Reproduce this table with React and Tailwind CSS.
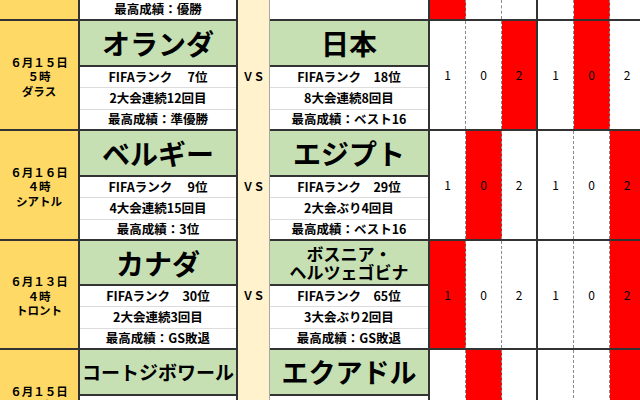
import React from "react";

const matches = [
  {
    date: ["６月１５日", "５時", "ダラス"],
    h: 110,
    a: { name: ["オランダ"], size: "text-[28px]", info: ["FIFAランク　 7位", "2大会連続12回目", "最高成績：準優勝"] },
    b: { name: ["日本"], size: "text-[28px]", info: ["FIFAランク　18位", "8大会連続8回目", "最高成績：ベスト16"] },
    red: [2, 4],
  },
  {
    date: ["６月１６日", "４時", "シアトル"],
    h: 110,
    a: { name: ["ベルギー"], size: "text-[28px]", info: ["FIFAランク　 9位", "4大会連続15回目", "最高成績：3位"] },
    b: { name: ["エジプト"], size: "text-[28px]", info: ["FIFAランク　29位", "2大会ぶり4回目", "最高成績：ベスト16"] },
    red: [1, 5],
  },
  {
    date: ["６月１３日", "４時", "トロント"],
    h: 109,
    a: { name: ["カナダ"], size: "text-[28px]", info: ["FIFAランク　30位", "2大会連続3回目", "最高成績：GS敗退"] },
    b: { name: ["ボスニア・", "ヘルツェゴビナ"], size: "text-[17px] leading-[18px]", info: ["FIFAランク　65位", "3大会ぶり2回目", "最高成績：GS敗退"] },
    red: [0, 5],
  },
  {
    date: ["６月１５日", "８時", "マイアミ"],
    h: 110,
    a: { name: ["コートジボワール"], size: "text-[19px]", info: ["FIFAランク　42位", "3大会ぶり4回目", "最高成績：GS敗退"] },
    b: { name: ["エクアドル"], size: "text-[27px]", info: ["FIFAランク　23位", "2大会連続5回目", "最高成績：ベスト16"] },
    red: [1, 5],
  },
];

const scores = ["1", "0", "2", "1", "0", "2"];

function ScoreCells({ red, show }) {
  return scores.map((s, i) => {
    const solid = i === 2 || i === 5;
    return (
      <div
        key={i}
        className={`w-[36px] shrink-0 border-b-2 border-[#333] ${red.includes(i) ? "bg-[#ff0000]" : "bg-white"}`}
      >
        <div
          className={
            solid
              ? "h-full border-r-2 border-[#333] flex items-center justify-center text-[12px]"
              : "h-full border-r border-dashed border-[#8a8a8a] flex items-center justify-center text-[12px]"
          }
        >
          {show ? s : ""}
        </div>
      </div>
    );
  });
}

function Team({ team, w, header }) {
  return (
    <div className={`${w} shrink-0 flex flex-col border-r-2 border-[#333] bg-white`}>
      <div
        className={`${header} shrink-0 bg-[#c6e0b4] border-b-2 border-[#333] flex flex-col items-center justify-center font-bold ${team.size}`}
      >
        {team.name.map((n) => (
          <span key={n}>{n}</span>
        ))}
      </div>
      <div className="h-[21px] border-b border-[#dcdcdc] flex items-center justify-center text-[12.5px] font-bold whitespace-pre">
        {team.info[0]}
      </div>
      <div className="h-[22px] border-b border-[#dcdcdc] flex items-center justify-center text-[12.5px] font-bold">
        {team.info[1]}
      </div>
      <div className="h-[21px] border-b-2 border-[#333] flex items-center justify-center text-[12.5px] font-bold">
        {team.info[2]}
      </div>
    </div>
  );
}

function Match({ m }) {
  const header = m.h === 110 ? "h-[46px]" : "h-[45px]";
  return (
    <div className={`flex shrink-0 ${m.h === 110 ? "h-[110px]" : "h-[109px]"}`}>
      <div className="w-[80px] shrink-0 bg-[#ffd966] border-r-2 border-b-2 border-[#333] pt-[3px] flex flex-col items-center justify-center text-[11.5px] font-bold leading-[14.5px] whitespace-nowrap">
        {m.date.map((d) => (
          <span key={d}>{d}</span>
        ))}
      </div>
      <Team team={m.a} w="w-[158px]" header={header} />
      <div className="w-[32px] shrink-0 bg-[#fff2cc] border-r border-[#a6a6a6] flex items-center justify-center text-[11px] font-bold">
        ＶＳ
      </div>
      <Team team={m.b} w="w-[160px]" header={header} />
      <ScoreCells red={m.red} show />
    </div>
  );
}

export default function App() {
  return (
    <div className="w-[640px] h-[400px] overflow-hidden bg-white text-black font-['Noto_Sans_CJK_JP','Noto_Sans',sans-serif]">
      <div className="w-[646px] flex flex-col">
        <div className="flex h-[21px] shrink-0">
          <div className="w-[80px] shrink-0 bg-[#ffd966] border-r-2 border-b-2 border-[#333]" />
          <div className="w-[158px] shrink-0 bg-white border-r-2 border-b-2 border-[#333] flex items-center justify-center text-[12.5px] font-bold">
            最高成績：優勝
          </div>
          <div className="w-[32px] shrink-0 bg-[#fff2cc] border-r border-[#a6a6a6]" />
          <div className="w-[160px] shrink-0 bg-white border-r-2 border-b-2 border-[#333]" />
          <ScoreCells red={[0, 4]} show={false} />
        </div>
        {matches.map((m) => (
          <Match key={m.date.join()} m={m} />
        ))}
      </div>
    </div>
  );
}
